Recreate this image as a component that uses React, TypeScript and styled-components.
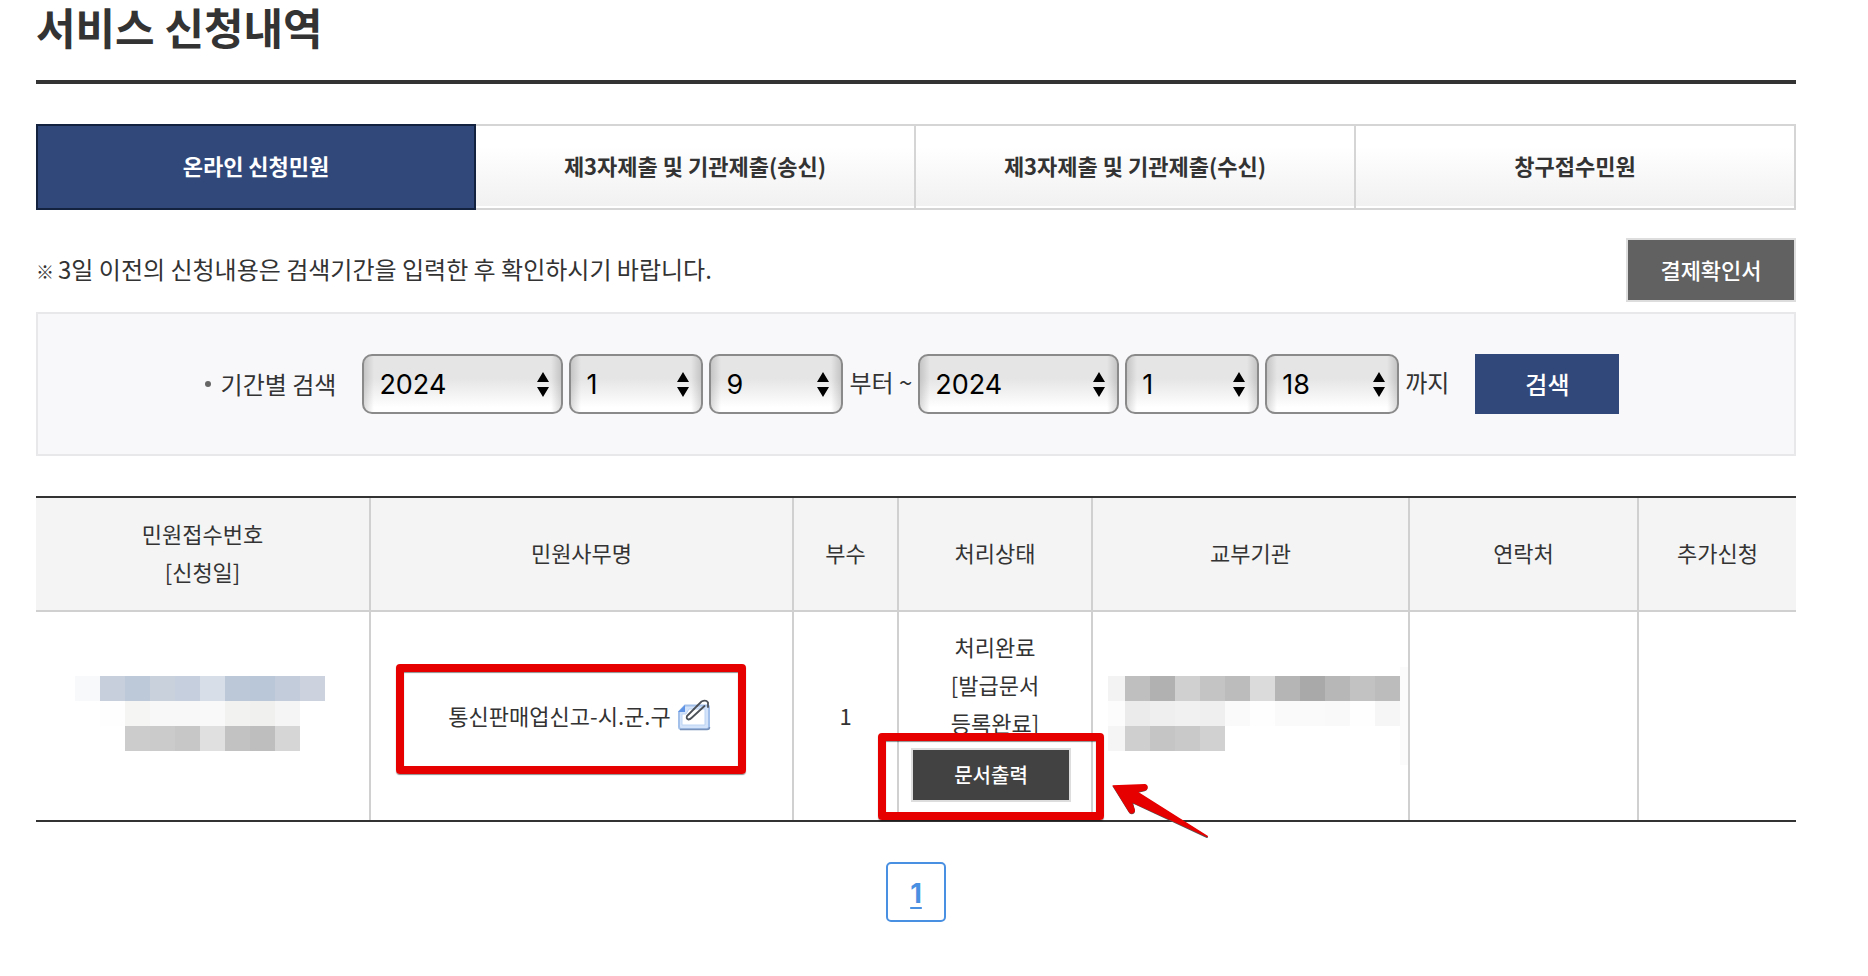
import React from 'react';
import styled, { createGlobalStyle, css } from 'styled-components';

const GlobalStyle = createGlobalStyle`
  *, *::before, *::after { box-sizing: border-box; }
  body {
    margin: 0;
    background: #fff;
    color: #333;
    font-family: "Noto Sans CJK KR", "Noto Sans", sans-serif;
    font-size: 22px;
    line-height: 38px;
  }
  button, select, input { font-family: inherit; }
`;

const Page = styled.main`
  padding: 0 72px 54px 36px;
`;

const Title = styled.h1`
  margin: 0 0 40px;
  padding-bottom: 28px;
  border-bottom: 4px solid #333;
  font-size: 43px;
  font-weight: 700;
  line-height: 52px;
`;

const Tabs = styled.nav`
  display: grid;
  grid-template-columns: repeat(4, 1fr);
  margin-bottom: 28px;
`;

const Tab = styled.a<{ $active?: boolean }>`
  display: flex;
  align-items: center;
  justify-content: center;
  height: 86px;
  padding-bottom: 4px;
  border: 2px solid #d5d5d5;
  border-left: 0;
  background: linear-gradient(#fff 25%, #f1f1f1 97%, #fff 97%);
  color: #333;
  font-weight: 700;
  text-decoration: none;
  ${(p) =>
    p.$active &&
    css`
      border: 2px solid #13233f;
      background: #31487b;
      color: #fff;
    `}
`;

const NoticeRow = styled.div`
  display: flex;
  align-items: center;
  justify-content: space-between;
  margin-bottom: 10px;
`;

const Notice = styled.p`
  margin: 0;
  font-size: 24px;
`;

const NoticeMark = styled.span`
  font-size: 18px;
`;

const DarkButton = styled.button<{ $small?: boolean }>`
  display: block;
  width: ${(p) => (p.$small ? 160 : 170)}px;
  height: ${(p) => (p.$small ? 54 : 64)}px;
  padding: 0 0 2px;
  border: 2px solid #ddd;
  background: ${(p) => (p.$small ? '#424242' : '#616161')};
  color: #fff;
  font-size: ${(p) => (p.$small ? 20 : 22)}px;
  font-weight: 500;
`;

const SearchForm = styled.form`
  display: flex;
  align-items: center;
  justify-content: center;
  gap: 6px;
  min-height: 144px;
  margin-bottom: 40px;
  padding: 0 8px 0 0;
  border: 2px solid #e8e8ea;
  background: #f8f8fb;
  font-size: 24px;
`;

const SearchLabel = styled.span`
  display: flex;
  align-items: center;
  gap: 10px;
  margin-right: 20px;
  &::before {
    content: "";
    width: 6px;
    height: 6px;
    border-radius: 50%;
    background: #666;
  }
`;

const RangeText = styled.span`
  padding-bottom: 4px;
`;

const SelectBox = styled.span<{ $wide?: boolean }>`
  position: relative;
  display: block;
  width: ${(p) => (p.$wide ? 201 : 134)}px;
  height: 60px;
  svg {
    position: absolute;
    top: 18px;
    right: 14px;
    pointer-events: none;
  }
`;

const Select = styled.select`
  appearance: none;
  display: block;
  width: 100%;
  height: 100%;
  padding: 0 32px 0 15px;
  border: 2px solid #8a8a8a;
  border-radius: 10px;
  background:
    linear-gradient(90deg, rgba(0, 0, 0, 0.14), transparent 10px),
    linear-gradient(270deg, rgba(0, 0, 0, 0.14), transparent 10px),
    linear-gradient(#e5e5e5 40%, #fff 92%);
  color: #000;
  font-family: Inter, "Noto Sans CJK KR", sans-serif;
  font-size: 27px;
`;

const SearchButton = styled.button`
  width: 144px;
  height: 60px;
  margin-left: 20px;
  padding: 0 0 2px;
  border: 0;
  background: #31487b;
  color: #fff;
  font-size: 24px;
  font-weight: 500;
`;

const Table = styled.table`
  width: 100%;
  table-layout: fixed;
  border-collapse: separate;
  border-spacing: 0;
  border-top: 2px solid #333;
  border-bottom: 2px solid #333;
  text-align: center;
`;

const HeadCell = styled.th`
  height: 114px;
  padding: 0 0 4px;
  border-right: 2px solid #d0d0d0;
  border-bottom: 2px solid #d0d0d0;
  background: #f4f4f4;
  font-weight: 400;
  &:last-child { border-right: 0; }
`;

const Cell = styled.td<{ $flush?: boolean }>`
  position: relative;
  height: 208px;
  padding: ${(p) => (p.$flush ? '0' : '15px 12px 18px')};
  border-right: 2px solid #d0d0d0;
  vertical-align: middle;
  &:last-child { border-right: 0; }
`;

const ServiceName = styled.span`
  display: flex;
  align-items: center;
  justify-content: center;
  gap: 6px;
  padding-right: 4px;
`;

const Status = styled.p`
  margin: 0 0 7px;
`;

const Frame = styled.span<{ $place: 'name' | 'print' }>`
  position: absolute;
  z-index: 1;
  border: 8px solid #e60000;
  border-radius: 4px;
  box-shadow: 0 1px 1px rgba(0, 0, 0, 0.45), inset 0 1px 1px rgba(0, 0, 0, 0.45);
  pointer-events: none;
  ${(p) =>
    p.$place === 'name'
      ? css`left: 25px; top: 52px; width: 350px; height: 110px;`
      : css`left: -21px; bottom: 0; width: 226px; height: 87px;`}
`;

const ArrowMark = styled.svg`
  position: absolute;
  z-index: 1;
  left: 17px;
  top: 171px;
  pointer-events: none;
`;

const MosaicArt = styled.svg<{ $right?: boolean }>`
  display: block;
  margin: ${(p) => (p.$right ? '0 0 0 auto' : '0 auto')};
`;

const Pagination = styled.nav`
  display: flex;
  justify-content: center;
  margin-top: 40px;
`;

const PageLink = styled.a`
  display: flex;
  align-items: center;
  justify-content: center;
  width: 60px;
  height: 60px;
  padding-top: 4px;
  border: 2px solid #4a90e2;
  border-radius: 5px;
  color: #4a90e2;
  font-family: Inter, sans-serif;
  font-size: 27px;
  font-weight: 700;
  text-underline-offset: 4px;
`;

const tabs = ['온라인 신청민원', '제3자제출 및 기관제출(송신)', '제3자제출 및 기관제출(수신)', '창구접수민원'];

const columns: { label: React.ReactNode; weight: number }[] = [
  { label: <>민원접수번호<br />[신청일]</>, weight: 335 },
  { label: '민원사무명', weight: 423 },
  { label: '부수', weight: 105 },
  { label: '처리상태', weight: 194 },
  { label: '교부기관', weight: 317 },
  { label: '연락처', weight: 229 },
  { label: '추가신청', weight: 157 },
];
const totalWeight = columns.reduce((sum, c) => sum + c.weight, 0);

type Block = [x: number, y: number, width: number, height: number, fill: string];

// One row of mosaic blocks, 25px wide, starting at x
const row = (x: number, y: number, height: number, fills: string[]): Block[] =>
  fills.map((fill, i) => [x + i * 25, y, 25, height, `#${fill}`]);

const numberMosaic: Block[] = [
  ...row(0, 0, 25, ['f7f9fb', 'c7cfdc', 'bdc8d9', 'c9d1dd', 'c5cfde', 'd7dee8', 'bcc7d8', 'bac7d8', 'c2ccdb', 'ccd3df']),
  ...row(25, 25, 25, ['fefefe', 'f5f5f4', 'f8f8f8', 'f8f8f8', 'f9f9f9', 'f2f2f0', 'f0f0ee', 'f5f5f5']),
  ...row(50, 50, 25, ['cccccc', 'cbcbcb', 'c7c7c7', 'e0e0e0', 'c2c2c2', 'bebebe', 'd6d6d6']),
];

const officeMosaic: Block[] = [
  [0, 9, 17, 25, '#f3f3f3'],
  [0, 34, 17, 25, '#fcfcfc'],
  [0, 59, 17, 25, '#f5f5f5'],
  [292, 0, 8, 98, '#fbfbfb'],
  ...row(17, 9, 25, ['bfbfbf', 'b1b1b1', 'd0d0d0', 'c4c4c4', 'bcbcbc', 'dbdbdb', 'b5b5b5', 'a9a9a9', 'b7b7b7', 'c2c2c2', 'bcbcbc']),
  ...row(17, 34, 25, ['ebebeb', 'efefef', 'f1f1f1', 'efefef', 'fafafa', 'fefefe', 'fafafa', 'fafafa', 'f9f9f9', 'fefefe', 'f6f6f6']),
  ...row(17, 59, 25, ['cfcfcf', 'c5c5c5', 'c9c9c9', 'd1d1d1']),
];

function Mosaic({ blocks, width, height, right }: { blocks: Block[]; width: number; height: number; right?: boolean }) {
  return (
    <MosaicArt width={width} height={height} $right={right} shapeRendering="crispEdges" aria-hidden="true">
      {blocks.map(([x, y, w, h, fill]) => (
        <rect key={`${x}-${y}`} x={x} y={y} width={w} height={h} fill={fill} />
      ))}
    </MosaicArt>
  );
}

function DateSelect({ label, value, options, wide }: { label: string; value: number; options: number[]; wide?: boolean }) {
  return (
    <SelectBox $wide={wide}>
      <Select aria-label={label} defaultValue={value}>
        {options.map((o) => (
          <option key={o} value={o}>{o}</option>
        ))}
      </Select>
      <svg width="12" height="26" viewBox="0 0 12 26" aria-hidden="true">
        <path d="M6 0 12 10H0ZM0 15H12L6 25Z" fill="#000" />
      </svg>
    </SelectBox>
  );
}

function AttachmentIcon() {
  return (
    <svg width="34" height="32" viewBox="0 0 34 32" role="img" aria-label="첨부파일">
      <path d="M8 6.500H31Q32 6.500 32 8V28Q32 30 30 30H4Q2 30 2 28V13Z" fill="#d3e3fa" stroke="#a3c0ea" strokeWidth="2" />
      <path d="M1 13 8 6V13Z" fill="#5f93e6" />
      <path d="M5 15H9L12 10H28V26H5Z" fill="#fff" stroke="#bcd3f4" />
      <path d="M3 30.500H30Q32.500 30.500 32.500 28" fill="none" stroke="#7791b8" strokeWidth="1.500" />
      <path d="M16.500 10.500 10 17Q9 20 11.500 20.500Q13 20.500 15 18.500L27.500 7M20 7 24.500 2.500Q29 .5 31 3.500V8" fill="none" stroke="#4c5158" strokeWidth="1.800" strokeLinecap="round" />
      <path d="M16.500 10.500 20 7" stroke="#4c5158" strokeWidth="1.800" />
    </svg>
  );
}

const range = (from: number, to: number) => Array.from({ length: to - from + 1 }, (_, i) => from + i);
const years = range(2020, 2024);
const months = range(1, 12);
const days = range(1, 31);

export default function App() {
  return (
    <>
      <GlobalStyle />
      <Page>
        <Title>서비스 신청내역</Title>

        <Tabs aria-label="민원 구분">
          {tabs.map((tab, i) => (
            <Tab key={tab} href="#" $active={i === 0} aria-current={i === 0 ? 'page' : undefined}>{tab}</Tab>
          ))}
        </Tabs>

        <NoticeRow>
          <Notice><NoticeMark>※ </NoticeMark>3일 이전의 신청내용은 검색기간을 입력한 후 확인하시기 바랍니다.</Notice>
          <DarkButton type="button">결제확인서</DarkButton>
        </NoticeRow>

        <SearchForm onSubmit={(e) => e.preventDefault()}>
          <SearchLabel>기간별 검색</SearchLabel>
          <DateSelect label="시작 연도" value={2024} options={years} wide />
          <DateSelect label="시작 월" value={1} options={months} />
          <DateSelect label="시작 일" value={9} options={days} />
          <RangeText>부터 ~</RangeText>
          <DateSelect label="종료 연도" value={2024} options={years} wide />
          <DateSelect label="종료 월" value={1} options={months} />
          <DateSelect label="종료 일" value={18} options={days} />
          <RangeText>까지</RangeText>
          <SearchButton type="submit">검색</SearchButton>
        </SearchForm>

        <Table>
          <colgroup>
            {columns.map((c, i) => (
              <col key={i} style={{ width: `${(c.weight / totalWeight) * 100}%` }} />
            ))}
          </colgroup>
          <thead>
            <tr>
              {columns.map((c, i) => (
                <HeadCell key={i} scope="col">{c.label}</HeadCell>
              ))}
            </tr>
          </thead>
          <tbody>
            <tr>
              <Cell $flush><Mosaic blocks={numberMosaic} width={255} height={80} /></Cell>
              <Cell>
                <ServiceName>통신판매업신고-시.군.구<AttachmentIcon /></ServiceName>
                <Frame $place="name" />
              </Cell>
              <Cell>1</Cell>
              <Cell>
                <Status>처리완료<br />[발급문서<br />등록완료]</Status>
                <DarkButton type="button" $small>문서출력</DarkButton>
                <Frame $place="print" />
              </Cell>
              <Cell $flush>
                <Mosaic blocks={officeMosaic} width={300} height={98} right />
                <ArrowMark width="100" height="58" viewBox="90 430 300 174" aria-hidden="true">
                  <path d="M97 439 197 435Q204 438 203 446Q202 454 194 455L175 459 384 591Q385 595 380 595L160 492 165 513Q165 523 155 524Q149 524 146 518Z" fill="#555" />
                  <path d="M97 437 195 433Q204 435 203 444Q202 452 194 453L175 457 384 589Q385 593 380 592L157 489 165 511Q165 521 155 522Q149 522 146 516Z" fill="#e60000" />
                </ArrowMark>
              </Cell>
              <Cell />
              <Cell />
            </tr>
          </tbody>
        </Table>

        <Pagination aria-label="페이지">
          <PageLink href="#" aria-current="page">1</PageLink>
        </Pagination>
      </Page>
    </>
  );
}
